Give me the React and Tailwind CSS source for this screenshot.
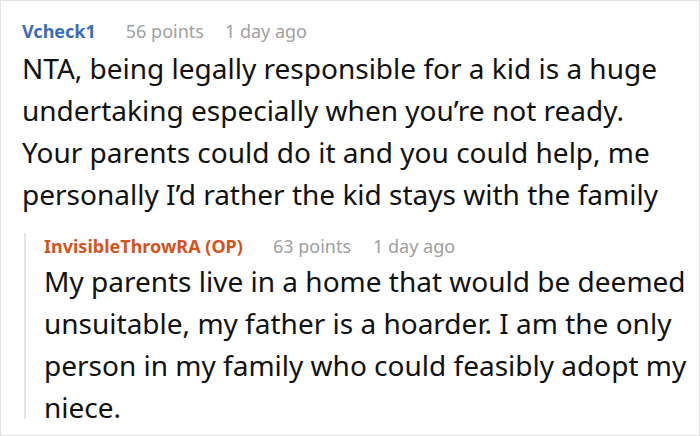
export default function App() {
  const font = { fontFamily: '"Noto Sans", "Open Sans", sans-serif' };
  return (
    <div
      className="w-[700px] h-[436px] border border-[#e2e2e2] bg-white overflow-hidden box-border"
      style={font}
    >
      <div className="pl-[21px] pt-[16px]">
        {/* Parent comment */}
        <div className="flex items-baseline text-[18px] leading-[28px]">
          <span className="font-bold text-[#3b6cb8]">Vcheck1</span>
          <span className="ml-[30px] text-[#a0a0a0]">56 points</span>
          <span className="ml-[21px] text-[#a0a0a0]">1 day ago</span>
        </div>
        <p className="text-[28px] leading-[42px] text-[#111] mt-[2px] pr-[8px]">
          NTA, being legally responsible for a kid is a huge undertaking especially when you’re not ready. Your parents could do it and you could help, me personally I’d rather the kid stays with the family
        </p>

        {/* Reply */}
        <div className="ml-[2px] mt-[18px] h-[186px] border-l-2 border-[#e6e6e6] pl-[18px]">
          <div className="flex items-baseline pt-[1px] text-[18px] leading-[24px]">
            <span className="font-bold text-[#d4531f]">InvisibleThrowRA (OP)</span>
            <span className="ml-[30px] text-[#a0a0a0]">63 points</span>
            <span className="ml-[22px] text-[#a0a0a0]">1 day ago</span>
          </div>
          <p className="text-[28px] leading-[42px] text-[#111] mt-[2px] pr-[8px]">
            My parents live in a home that would be deemed unsuitable, my father is a hoarder. I am the only person in my family who could feasibly adopt my niece.
          </p>
        </div>
      </div>
    </div>
  );
}
